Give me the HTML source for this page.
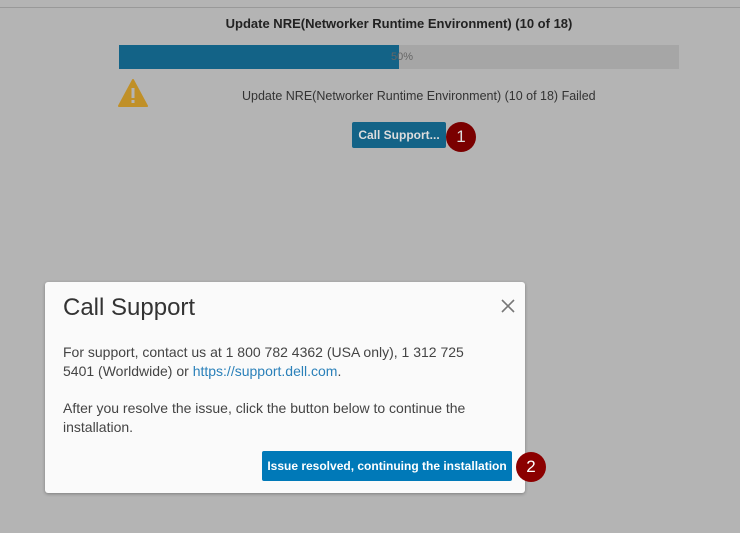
<!DOCTYPE html>
<html><head><style>
body{margin:0;width:740px;height:533px;background:#b4b4b4;position:relative;overflow:hidden;font-family:"Liberation Sans",sans-serif;}
.abs{position:absolute;}
</style></head><body>
<div class="abs" style="left:0;top:7px;width:740px;height:1px;background:#999"></div>
<div class="abs" style="left:0;top:16px;width:798px;text-align:center;font-size:13px;font-weight:bold;color:#222;">Update NRE(Networker Runtime Environment) (10 of 18)</div>
<div class="abs" style="left:119px;top:45px;width:560px;height:24px;background:#a6a6a6"></div>
<div class="abs" style="left:119px;top:45px;width:280px;height:24px;background:#136387"></div>
<div class="abs" style="left:391px;top:51px;font-size:11px;color:#666;z-index:2;">50%</div>
<svg class="abs" style="left:118px;top:79px" width="30" height="28"><path d="M15 1 L29 27 L1 27 Z" fill="#c09028" stroke="#c09028" stroke-linejoin="round" stroke-width="2"/><rect x="13.5" y="9" width="3" height="10" fill="#b4b4b4"/><rect x="13.5" y="21" width="3" height="3" fill="#b4b4b4"/></svg>
<div class="abs" style="left:242px;top:89px;font-size:12.5px;color:#333;">Update NRE(Networker Runtime Environment) (10 of 18) Failed</div>
<div class="abs" style="left:352px;top:122px;width:94px;height:26px;background:#136387;border-radius:2px;color:#ddd;font-size:12px;font-weight:bold;line-height:26px;text-align:center;">Call Support...</div>
<div class="abs" style="left:446px;top:122px;width:30px;height:30px;border-radius:50%;background:#7a0000;color:#ddd;font-size:17px;text-align:center;line-height:30px;">1</div>
<div class="abs" style="left:45px;top:282px;width:480px;height:211px;background:#fafafa;border-radius:3px;box-shadow:0 1px 3px rgba(0,0,0,.3);"></div>
<div class="abs" style="left:63px;top:294px;font-size:24px;color:#333;">Call Support</div>
<svg class="abs" style="left:500px;top:298px" width="16" height="16"><path d="M2 2 L14 14 M14 2 L2 14" stroke="#777" stroke-width="1.6"/></svg>
<div class="abs" style="left:63px;top:343px;width:432px;font-size:14px;line-height:18.5px;color:#444;">For support, contact us at 1 800 782 4362 (USA only), 1 312 725 5401 (Worldwide) or <span style="color:#2a80b9">https://support.dell.com</span>.</div>
<div class="abs" style="left:63px;top:399px;width:455px;font-size:14px;line-height:18.5px;color:#444;">After you resolve the issue, click the button below to continue the installation.</div>
<div class="abs" style="left:262px;top:451px;width:250px;height:30px;background:#0079b8;border-radius:2px;color:#fff;font-size:12px;font-weight:bold;line-height:30px;text-align:center;">Issue resolved, continuing the installation</div>
<div class="abs" style="left:516px;top:452px;width:30px;height:30px;border-radius:50%;background:#8b0000;color:#fff;font-size:17px;text-align:center;line-height:30px;">2</div>
</body></html>
